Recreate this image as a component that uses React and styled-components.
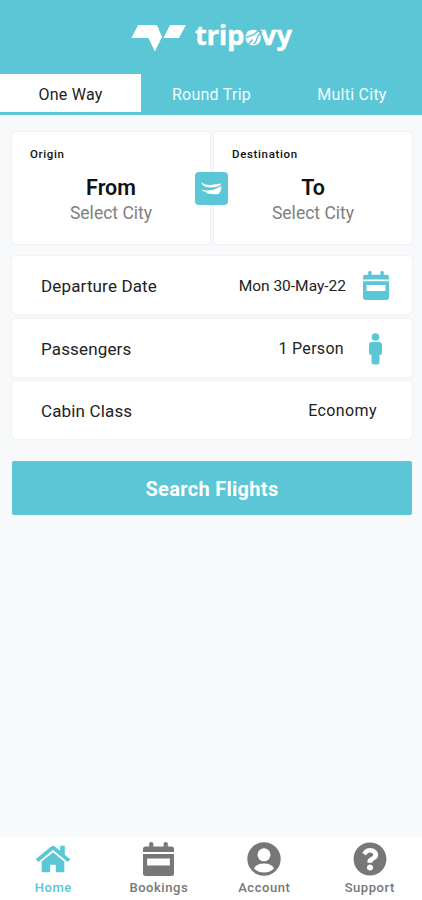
import React from 'react';
import styled, { createGlobalStyle } from 'styled-components';
import { FaHome, FaQuestionCircle } from 'react-icons/fa';

const teal = '#5bc6d6';
const grey = '#777777';

const GlobalStyle = createGlobalStyle`
  * {
    box-sizing: border-box;
  }

  body {
    margin: 0;
    background: #f7f9fb;
    font-family: Roboto, 'Liberation Sans', sans-serif;
  }

  button {
    border: 0;
    padding: 0;
    background: none;
    font-family: inherit;
  }
`;

const Screen = styled.div`
  display: flex;
  flex-direction: column;
  width: 422px;
  height: 900px;
  overflow: hidden;
  background: #f7f9fb;
`;

const Header = styled.header`
  display: flex;
  justify-content: center;
  height: 74px;
  padding-top: 11px;
  background: ${teal};
`;

const Tabs = styled.nav`
  display: grid;
  grid-template-columns: 141px 141px 140px;
  height: 41px;
  padding-bottom: 3px;
  background: ${teal};
`;

const Tab = styled.button`
  padding-top: 3px;
  background: ${(props) => (props.$active ? '#ffffff' : 'transparent')};
  color: ${(props) => (props.$active ? '#222222' : '#f2fdff')};
  font-size: 16px;
  letter-spacing: 0.25px;
  line-height: 35px;
`;

const Main = styled.main`
  flex: 1;
  padding: 17px 10px 0 12px;
`;

const Route = styled.section`
  position: relative;
  display: grid;
  grid-template-columns: 198px 198px;
  gap: 4px;
  height: 112px;
  margin-bottom: 12px;
`;

const Card = styled.div`
  background: #ffffff;
  border-radius: 4px;
  box-shadow: 0 0 2px rgba(40, 60, 70, 0.13);
`;

const Place = styled(Card)`
  display: flex;
  flex-direction: column;
  align-items: center;
  padding-top: 14px;
`;

const PlaceLabel = styled.div`
  align-self: flex-start;
  padding-left: 18px;
  color: #111111;
  font-size: 11.5px;
  font-weight: 500;
  letter-spacing: 0.65px;
  line-height: 16px;
`;

const PlaceName = styled.div`
  margin-top: 13px;
  color: #111111;
  font-size: 21.5px;
  font-weight: 600;
  line-height: 26px;
`;

const PlaceCity = styled.div`
  color: #808080;
  font-size: 17.5px;
  line-height: 25px;
`;

const Swap = styled.button`
  position: absolute;
  top: 40px;
  left: 183px;
  width: 33px;
  height: 33px;
  border-radius: 4px;
  background: ${teal};
`;

const Option = styled(Card)`
  display: flex;
  align-items: center;
  height: 58px;
  margin-bottom: ${(props) => props.$gap || 4}px;
  padding: 1px ${(props) => props.$right}px 0 29px;
  color: #222222;
  font-size: 17px;
  letter-spacing: 0.15px;
`;

const OptionValue = styled.span`
  margin-left: auto;
  font-size: ${(props) => props.$size || 16}px;
  letter-spacing: ${(props) => props.$spacing || 0}px;
`;

const OptionIcon = styled.span`
  display: flex;
  justify-content: center;
  width: 28px;
  margin-left: ${(props) => props.$gap}px;
  color: ${teal};
`;

const Search = styled.button`
  width: 400px;
  height: 54px;
  margin-top: 18px;
  border-radius: 2px;
  background: ${teal};
  color: #ffffff;
  font-size: 20px;
  font-weight: 700;
  letter-spacing: 0.3px;
  line-height: 56px;
`;

const BottomBar = styled.nav`
  display: grid;
  grid-template-columns: repeat(4, 1fr);
  height: 63px;
  background: #ffffff;
`;

const BottomItem = styled.button`
  display: flex;
  flex-direction: column;
  align-items: center;
  padding: 4px 0 0 1px;
  color: ${(props) => (props.$active ? teal : grey)};
  font-size: 13px;
  font-weight: 500;
  letter-spacing: 0.55px;
`;

const BottomIcon = styled.span`
  display: flex;
  align-items: center;
  height: 36px;
  margin-bottom: 3px;
`;

const Logo = () => (
  <svg width="164" height="48" viewBox="129 10 164 48">
    <g fill="#ffffff">
      <path d="M131.5 37 L138 24 H157 L162 36 L154.8 50.5 L148.5 37 Z" />
      <path d="M163.5 37 L170 24 H186 L179 37 Z" />
      <text
        x="195"
        y="44"
        fontFamily="'Noto Sans', sans-serif"
        fontSize="26"
        fontWeight="700"
        textLength="97"
        lengthAdjust="spacingAndGlyphs"
        stroke="#ffffff"
        strokeWidth="0.4"
      >
        tripovy
      </text>
      <circle cx="252.5" cy="37" r="5" />
    </g>
    <path fill="none" stroke={teal} strokeWidth="1.4" d="M246 36.5 L254 33.5 L260 28.5 M262 30 L258 35 L255.5 41.5 L253 43 M249 43 L252.5 38.5" />
  </svg>
);

const SwapIcon = () => (
  <svg width="33" height="33" viewBox="0 0 33 33" fill="#ffffff">
    <path d="M6 10 Q9 13 15 13 L27 11.5 Q24 15.5 15 15.5 Q7 15 6 10 Z" />
    <path d="M6 17.5 Q11 19 18 18 L26.5 14 Q26 20 23.5 22 Q15 22.5 10 21 L13 20 Q8 20 6 17.5 Z" />
  </svg>
);

const CalendarIcon = ({ width, height }) => (
  <svg width={width} height={height} viewBox="0 0 30 34" preserveAspectRatio="none" fill="currentColor">
    <path d="M0 10 V7 Q0 4.5 2.5 4.5 H6 V1.5 Q6 0 8 0 T10 1.5 V4.5 H20 V1.5 Q20 0 22 0 T24 1.5 V4.5 H27.5 Q30 4.5 30 7 V10 Z" />
    <path fillRule="evenodd" d="M0 12 H30 V31.5 Q30 34 27.5 34 H2.5 Q0 34 0 31.5 Z M4 16.5 V23.5 H26 V16.5 Z" />
  </svg>
);

const PersonIcon = () => (
  <svg width="13" height="32" viewBox="0 0 13 32" fill="currentColor">
    <circle cx="6.5" cy="4" r="3.8" />
    <path d="M3 9 H10 Q13 9 13 12 V20 Q13 22 10.5 22 V29 Q10.5 31.5 8 31.5 H5 Q2.5 31.5 2.5 29 V22 Q0 22 0 20 V12 Q0 9 3 9 Z" />
  </svg>
);

const AccountIcon = () => (
  <svg width="34" height="34" viewBox="0 0 34 34">
    <circle cx="17" cy="17" r="16.7" fill={grey} />
    <circle cx="17" cy="12.8" r="6.5" fill="#ffffff" />
    <path d="M7 26.5 Q9.5 21.5 17 21.5 T27 26.5 Q23 30.5 17 30.5 T7 26.5 Z" fill="#ffffff" />
  </svg>
);

const bottomItems = [
  { label: 'Home', icon: <FaHome size={34} />, active: true },
  { label: 'Bookings', icon: <CalendarIcon width={31} height={34} /> },
  { label: 'Account', icon: <AccountIcon /> },
  { label: 'Support', icon: <FaQuestionCircle size={34} /> },
];

const App = () => (
  <Screen>
    <GlobalStyle />
    <Header>
      <Logo />
    </Header>
    <Tabs>
      <Tab $active>One Way</Tab>
      <Tab>Round Trip</Tab>
      <Tab>Multi City</Tab>
    </Tabs>
    <Main>
      <Route>
        <Place>
          <PlaceLabel>Origin</PlaceLabel>
          <PlaceName>From</PlaceName>
          <PlaceCity>Select City</PlaceCity>
        </Place>
        <Place>
          <PlaceLabel>Destination</PlaceLabel>
          <PlaceName>To</PlaceName>
          <PlaceCity>Select City</PlaceCity>
        </Place>
        <Swap aria-label="Swap cities">
          <SwapIcon />
        </Swap>
      </Route>
      <Option $right={22} $gap={5}>
        Departure Date
        <OptionValue $size={15.5}>Mon 30-May-22</OptionValue>
        <OptionIcon $gap={16}>
          <CalendarIcon width={26} height={29} />
        </OptionIcon>
      </Option>
      <Option $right={23}>
        Passengers
        <OptionValue $spacing={0.3}>1 Person</OptionValue>
        <OptionIcon $gap={17}>
          <PersonIcon />
        </OptionIcon>
      </Option>
      <Option $right={35}>
        Cabin Class
        <OptionValue $spacing={0.4}>Economy</OptionValue>
      </Option>
      <Search>Search Flights</Search>
    </Main>
    <BottomBar>
      {bottomItems.map((item) => (
        <BottomItem key={item.label} $active={item.active}>
          <BottomIcon>{item.icon}</BottomIcon>
          {item.label}
        </BottomItem>
      ))}
    </BottomBar>
  </Screen>
);

export default App;
